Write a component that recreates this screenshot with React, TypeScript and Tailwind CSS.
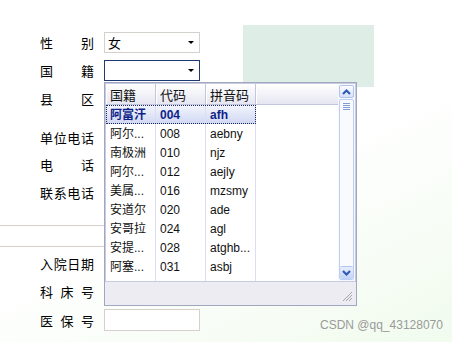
import React from 'react';

const cjk = { fontFamily: '"Noto Sans CJK SC", "Liberation Sans", sans-serif' };
const mixed = { fontFamily: '"Liberation Sans", "Noto Sans CJK SC", sans-serif' };

function Label({ chars }: { chars: string[] }) {
  return (
    <div className="w-[54px] flex justify-between text-[13px] text-black leading-none" style={cjk}>
      {chars.map((c, i) => (
        <span key={i}>{c}</span>
      ))}
    </div>
  );
}

function Arrow() {
  return <div className="w-0 h-0 border-l-[3px] border-r-[3px] border-t-[3px] border-l-transparent border-r-transparent border-t-black" />;
}

function Row({ chars, h, mt, children }: { chars: string[]; h: string; mt?: string; children?: React.ReactNode }) {
  return (
    <div className={`flex items-center pl-[40px] ${h} ${mt ?? ''}`}>
      <Label chars={chars} />
      <div className="ml-[10px]">{children}</div>
    </div>
  );
}

function Input() {
  return <div className="w-[96px] h-[22px] border border-[#d6cfcb] bg-white" />;
}

export default function App() {
  const rows = [
    ['阿富汗', '004', 'afh'],
    ['阿尔...', '008', 'aebny'],
    ['南极洲', '010', 'njz'],
    ['阿尔...', '012', 'aejly'],
    ['美属...', '016', 'mzsmy'],
    ['安道尔', '020', 'ade'],
    ['安哥拉', '024', 'agl'],
    ['安提...', '028', 'atghb...'],
    ['阿塞...', '031', 'asbj'],
  ];
  return (
    <div
      className="relative w-[452px] h-[342px] overflow-hidden"
      style={{ background: 'linear-gradient(155deg, #ffffff 52%, #f1fbee 100%)' }}
    >
      {/* decorative green block */}
      <div className="absolute left-[243px] top-[25px] w-[131px] h-[62px] bg-[#deeee6]" />

      {/* form */}
      <div className="relative flex flex-col pt-[28px]">
        <Row chars={['性', '别']} h="h-[28px]">
          <div className="w-[96px] h-[21px] border border-[#d4d0cc] bg-white flex items-center justify-between pl-[3px] pr-[5px]">
            <span className="text-[13px] leading-none" style={cjk}>女</span>
            <Arrow />
          </div>
        </Row>
        <Row chars={['国', '籍']} h="h-[28px]">
          <div className="w-[96px] h-[21px] border border-[#1c3a72] bg-white flex items-center justify-end pr-[5px]">
            <Arrow />
          </div>
        </Row>
        <Row chars={['县', '区']} h="h-[28px]">
          <Input />
        </Row>
        <Row chars={['单', '位', '电', '话']} h="h-[28px]" mt="mt-[11px]">
          <Input />
        </Row>
        <Row chars={['电', '话']} h="h-[27px]">
          <Input />
        </Row>
        <Row chars={['联', '系', '电', '话']} h="h-[29px]">
          <Input />
        </Row>
        <div className="mt-[18px] w-[240px] h-px bg-[#d6cfcb]" />
        <div className="mt-[20px] w-[240px] h-px bg-[#d6cfcb]" />
        <Row chars={['入', '院', '日', '期']} h="h-[28px]" mt="mt-[2px]">
          <Input />
        </Row>
        <Row chars={['科', '床', '号']} h="h-[29px]">
          <Input />
        </Row>
        <Row chars={['医', '保', '号']} h="h-[28px]">
          <Input />
        </Row>
      </div>

      {/* dropdown popup */}
      <div className="absolute left-[104px] top-[82px] w-[253px] h-[224px] border border-[#a3a6bf] bg-[#edecf2] flex flex-col">
        <div className="h-[199px] bg-white border border-[#c7cbe2] flex">
          {/* grid */}
          <div className="w-[232px] flex flex-col">
            <div
              className="h-[21px] flex border-b border-[#c3c5dc] text-[13px] text-[#111]"
              style={{ ...cjk, background: 'linear-gradient(#ffffff, #e6e6f2)' }}
            >
              {['国籍', '代码', '拼音码'].map((t) => (
                <div key={t} className="w-[50px] border-r border-[#c3c5dc] flex items-center pl-[4px] leading-none shadow-[inset_1px_0_0_#ffffff]">
                  {t}
                </div>
              ))}
              <div className="flex-1 shadow-[inset_1px_0_0_#ffffff]" />
            </div>
            {rows.map((r, i) => {
              const sel = i === 0;
              return (
                <div key={i} className="h-[19px] flex text-[12px] leading-none">
                  <div
                    className={`flex ${sel ? 'outline-1 outline-dotted outline-[#1a2a60] -outline-offset-1 font-bold text-[#0f1f8a]' : 'text-[#111]'}`}
                    style={sel ? { background: 'linear-gradient(#f4f6fd, #cfd7f2)' } : undefined}
                  >
                    {r.map((c, j) => (
                      <div key={j} className="w-[50px] border-r border-[#dcdcf2] flex items-center pl-[4px] overflow-hidden whitespace-nowrap" style={mixed}>
                        {c}
                      </div>
                    ))}
                  </div>
                </div>
              );
            })}
            <div className="flex-1 flex">
              <div className="w-[50px] border-r border-[#dcdcf2]" />
              <div className="w-[50px] border-r border-[#dcdcf2]" />
              <div className="w-[50px] border-r border-[#dcdcf2]" />
            </div>
          </div>
          {/* scrollbar */}
          <div className="flex-1 bg-[#f6f8fe] flex flex-col px-[1px] pt-[1px] pb-[1px]">
            <div
              className="h-[13px] rounded-[2px] border border-[#b0c4ee] flex items-center justify-center"
              style={{ background: 'linear-gradient(#fbfcff, #d6e2fa)' }}
            >
              <svg width="9" height="6" viewBox="0 0 9 6">
                <path d="M1 5 L4.5 1.5 L8 5" fill="none" stroke="#2c55b4" strokeWidth="2" />
              </svg>
            </div>
            <div className="flex-1 mt-[1px] rounded-[2px] border border-[#bccff3] flex flex-col items-center justify-between" style={{ background: '#f8fafe' }}>
              <div className="mt-[3px] flex flex-col gap-[1px]">
                <div className="w-[7px] h-px bg-[#7d9cd8]" />
                <div className="w-[7px] h-px bg-[#7d9cd8]" />
                <div className="w-[7px] h-px bg-[#7d9cd8]" />
                <div className="w-[7px] h-px bg-[#7d9cd8]" />
              </div>
              <div
                className="w-full h-[13px] rounded-[2px] border-t border-[#b0c4ee] flex items-center justify-center"
                style={{ background: 'linear-gradient(#e6eefd, #c0d3f6)' }}
              >
                <svg width="9" height="6" viewBox="0 0 9 6">
                  <path d="M1 1 L4.5 4.5 L8 1" fill="none" stroke="#2c55b4" strokeWidth="2" />
                </svg>
              </div>
            </div>
          </div>
        </div>
        <div className="flex-1 flex items-end justify-end pr-[3px] pb-[3px]">
          <svg width="11" height="11" viewBox="0 0 11 11">
            <path d="M10 1 L1 10 M10 4 L4 10 M10 7 L7 10" stroke="#a4a4b0" strokeWidth="1" />
          </svg>
        </div>
      </div>

      {/* watermark */}
      <div className="absolute left-[320px] top-[319px] text-[12px] text-[#9a9a9a] leading-none" style={mixed}>
        CSDN @qq_43128070
      </div>
    </div>
  );
}
